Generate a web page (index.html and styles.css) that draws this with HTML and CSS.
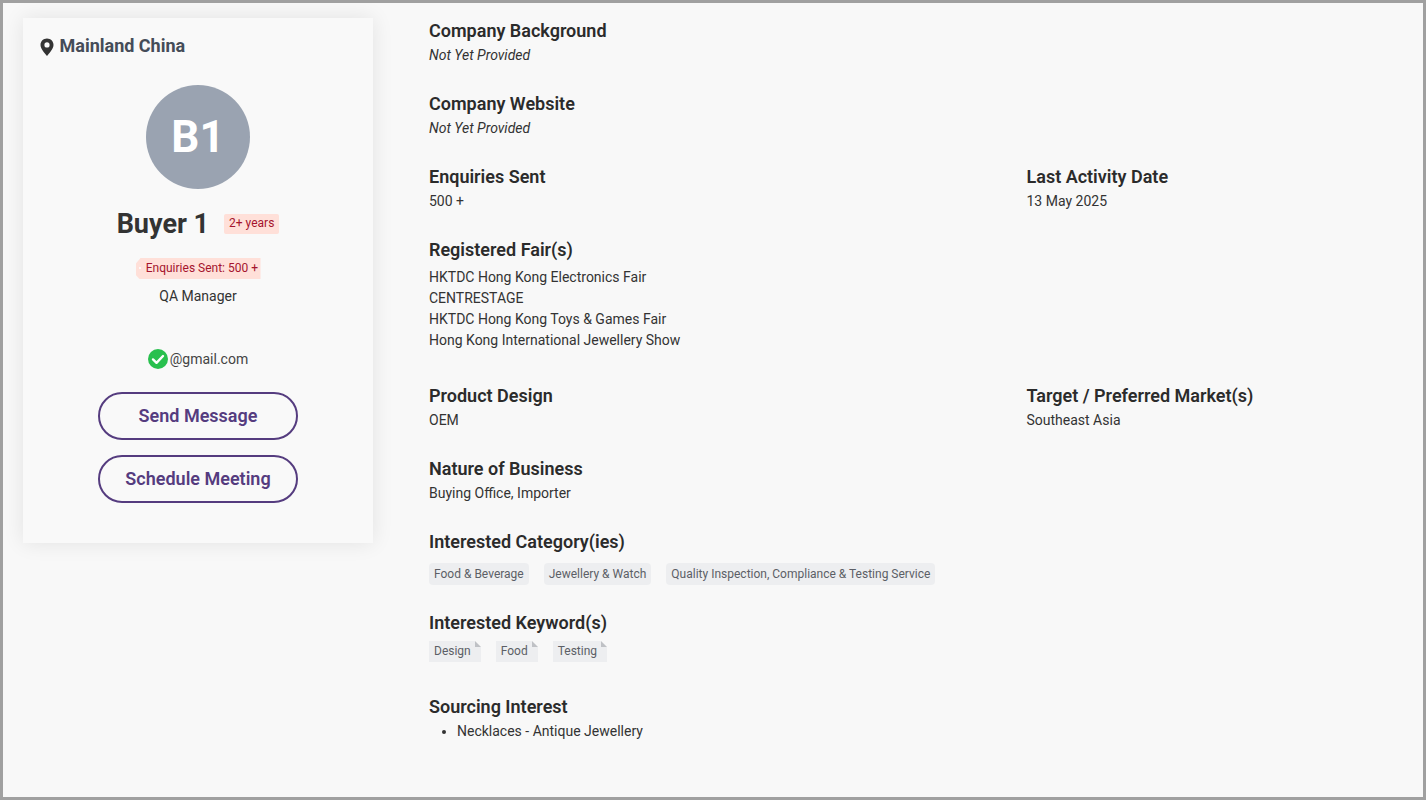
FILE: index.html
```html
<!DOCTYPE html>
<html lang="en">
<head>
<meta charset="utf-8">
<title>Buyer 1</title>
<link rel="stylesheet" href="styles.css">
</head>
<body>
<div class="frame">
  <aside class="card">
    <div class="location">
      <svg class="pin" viewBox="0 0 14 18" width="14" height="18"><path fill-rule="evenodd" fill="#333" d="M7 0.5C3.3 0.5 0.5 3.3 0.5 6.9C0.5 10.9 5 15.5 7 18C9 15.5 13.5 10.9 13.5 6.9C13.5 3.3 10.7 0.5 7 0.5ZM7 4.3A2.6 2.6 0 1 1 7 9.5A2.6 2.6 0 1 1 7 4.3Z"/></svg>
      <span>Mainland China</span>
    </div>
    <div class="avatar">B1</div>
    <div class="name-row">
      <span class="name">Buyer 1</span>
      <span class="years">2+ years</span>
    </div>
    <div class="enquiry-tag"><span class="enquiry-text">Enquiries Sent: 500 +</span></div>
    <div class="role">QA Manager</div>
    <div class="email">
      <svg viewBox="0 0 20 20" width="20" height="20"><circle cx="10" cy="10" r="10" fill="#28c04e"/><path d="M5 10.4L8.5 13.8L15 7" fill="none" stroke="#fff" stroke-width="2.4" stroke-linecap="round" stroke-linejoin="round"/></svg>
      <span>@gmail.com</span>
    </div>
    <button class="btn">Send Message</button>
    <button class="btn">Schedule Meeting</button>
  </aside>
  <main class="details">
    <section class="block">
      <h3>Company Background</h3>
      <p class="value empty">Not Yet Provided</p>
    </section>
    <section class="block">
      <h3>Company Website</h3>
      <p class="value empty">Not Yet Provided</p>
    </section>
    <section class="block two">
      <div>
        <h3>Enquiries Sent</h3>
        <p class="value">500 +</p>
      </div>
      <div>
        <h3>Last Activity Date</h3>
        <p class="value">13 May 2025</p>
      </div>
    </section>
    <section class="block fairs">
      <h3>Registered Fair(s)</h3>
      <p class="value">HKTDC Hong Kong Electronics Fair</p>
      <p class="value">CENTRESTAGE</p>
      <p class="value">HKTDC Hong Kong Toys &amp; Games Fair</p>
      <p class="value">Hong Kong International Jewellery Show</p>
    </section>
    <section class="block two">
      <div>
        <h3>Product Design</h3>
        <p class="value">OEM</p>
      </div>
      <div>
        <h3>Target / Preferred Market(s)</h3>
        <p class="value">Southeast Asia</p>
      </div>
    </section>
    <section class="block">
      <h3>Nature of Business</h3>
      <p class="value">Buying Office, Importer</p>
    </section>
    <section class="block categories">
      <h3>Interested Category(ies)</h3>
      <div class="tags">
        <span class="tag">Food &amp; Beverage</span>
        <span class="tag">Jewellery &amp; Watch</span>
        <span class="tag">Quality Inspection, Compliance &amp; Testing Service</span>
      </div>
    </section>
    <section class="block keywords">
      <h3>Interested Keyword(s)</h3>
      <div class="tags">
        <span class="tag kw">Design</span>
        <span class="tag kw">Food</span>
        <span class="tag kw">Testing</span>
      </div>
    </section>
    <section class="block">
      <h3>Sourcing Interest</h3>
      <ul class="list">
        <li>Necklaces - Antique Jewellery</li>
      </ul>
    </section>
  </main>
</div>
</body>
</html>
```

FILE: styles.css
```css
* { box-sizing: border-box; }
html, body { margin: 0; padding: 0; height: 100%; }
body {
  font-family: Roboto, "Liberation Sans", sans-serif;
  color: #333;
  background: #f8f8f8;
}
.frame {
  width: 1426px;
  height: 800px;
  border: 3px solid #a0a0a0;
  background: #f8f8f8;
  display: flex;
  align-items: flex-start;
  padding: 15px 0 0 20px;
  overflow: hidden;
}
.card {
  width: 350px;
  height: 525px;
  flex: none;
  background: #f9f9f9;
  box-shadow: 0 0 20px rgba(0, 0, 0, .09);
  display: flex;
  flex-direction: column;
  align-items: center;
}
.location {
  align-self: flex-start;
  display: flex;
  align-items: center;
  gap: 5.5px;
  margin: 15px 0 0 17px;
  height: 24px;
  font-size: 18px;
  font-weight: 700;
  color: #454c58;
}
.pin { flex: none; margin-top: 4px; }
.avatar {
  width: 104px;
  height: 104px;
  margin-top: 28px;
  border-radius: 50%;
  background: #9aa3b1;
  color: #fff;
  font-size: 44px;
  font-weight: 700;
  display: flex;
  align-items: center;
  justify-content: center;
}
.name-row {
  display: flex;
  align-items: center;
  gap: 15px;
  margin-top: 19px;
  height: 32px;
}
.name { font-size: 27px; font-weight: 700; color: #333; }
.years {
  font-size: 12px;
  color: #a5142e;
  background: #ffe0d9;
  height: 20px;
  line-height: 19px;
  padding: 0 5px;
  border-radius: 2px;
}
.enquiry-tag {
  position: relative;
  margin-top: 18px;
  height: 21px;
  width: 125px;
  background: #ffe0d9;
  clip-path: polygon(5px 0, 100% 0, 100% 100%, 4px 100%, 0 80%, 0 28%);
  font-size: 12px;
  line-height: 21px;
  color: #a5142e;
  text-align: right;
  padding-right: 2.5px;
}
.enquiry-tag::before {
  content: "";
  position: absolute;
  left: 3px;
  top: 9px;
  width: 2px;
  height: 2px;
  border-radius: 50%;
  background: #fff;
}
.role { font-size: 14px; line-height: 21px; margin-top: 7px; color: #333; }
.email {
  display: flex;
  align-items: center;
  gap: 2px;
  margin-top: 41px;
  height: 21px;
  font-size: 14px;
  color: #444;
}
.btn {
  display: block;
  width: 200px;
  height: 48px;
  margin-top: 15px;
  padding: 0 0 2px;
  flex: none;
  border: 2px solid #553c7f;
  border-radius: 24px;
  background: transparent;
  color: #553c7f;
  font-family: inherit;
  font-size: 18px;
  font-weight: 600;
}
.email + .btn { margin-top: 23px; }
.details {
  margin-left: 56px;
  flex: 1;
  min-width: 0;
  padding-top: 1px;
}
.block { margin-bottom: 26px; }
.block h3 {
  margin: 0;
  font-size: 18px;
  line-height: 24px;
  font-weight: 600;
  color: #2b2b2b;
}
.value {
  margin: 0;
  font-size: 14px;
  line-height: 21px;
  color: #333;
}
h3 + .value { margin-top: 2px; }
.empty { font-style: italic; }
.two { display: grid; grid-template-columns: 597.5px 1fr; }
.fairs { margin-bottom: 33px; }
.fairs h3 + .value { margin-top: 5px; }
.tags { display: flex; gap: 15px; }
.categories { margin-bottom: 26px; }
.categories .tags { margin-top: 9px; }
.tag {
  position: relative;
  height: 22px;
  line-height: 22px;
  padding: 0 5px;
  font-size: 12px;
  color: #5c5f66;
  background: #edeef0;
  border-radius: 4px;
}
.keywords { margin-bottom: 33px; }
.keywords .tags { margin-top: 6px; }
.kw { border-radius: 0; height: 21px; line-height: 20px; padding-right: 10px; }
.kw::after {
  content: "";
  position: absolute;
  top: 0;
  right: 0;
  border-style: solid;
  border-width: 3px;
  border-color: #f8f8f8 #f8f8f8 #bfc1c5 #bfc1c5;
}
.list {
  margin: 2px 0 0;
  padding-left: 28px;
  font-size: 14px;
  line-height: 21px;
  color: #333;
}
```
